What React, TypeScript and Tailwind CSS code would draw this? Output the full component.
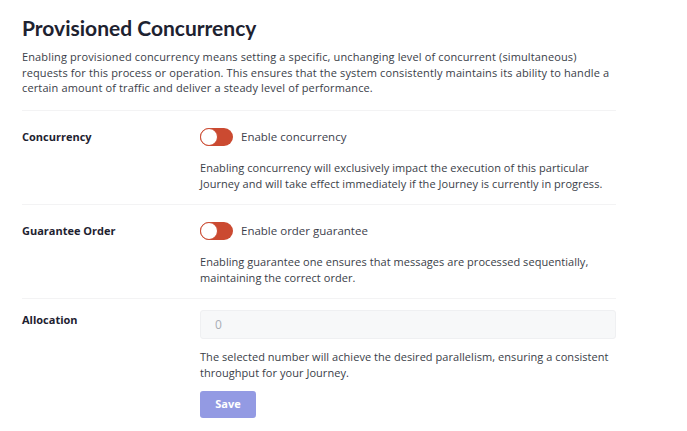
import { useState } from "react";

type Row = {
  id: string;
  label: string;
  toggle?: string;
  help: string;
};

const rows: Row[] = [
  {
    id: "concurrency",
    label: "Concurrency",
    toggle: "Enable concurrency",
    help: "Enabling concurrency will exclusively impact the execution of this particular Journey and will take effect immediately if the Journey is currently in progress.",
  },
  {
    id: "order",
    label: "Guarantee Order",
    toggle: "Enable order guarantee",
    help: "Enabling guarantee one ensures that messages are processed sequentially, maintaining the correct order.",
  },
];

function Toggle({ label }: { label: string }) {
  const [on, setOn] = useState(false);
  return (
    <label className="flex items-center gap-2 cursor-pointer">
      <button
        type="button"
        onClick={() => setOn(!on)}
        className="relative h-[18px] w-[33px] rounded-full bg-[#cb4a31]"
      >
        <span
          className={
            on
              ? "absolute top-0 right-0 h-[18px] w-[18px] rounded-full border border-[#cb4a31] bg-white"
              : "absolute top-0 left-0 h-[18px] w-[18px] rounded-full border border-[#cb4a31] bg-white"
          }
        />
      </button>
      <span className="text-[11.5px] text-[#3d414c]">{label}</span>
    </label>
  );
}

export default function App() {
  return (
    <div className="min-h-screen bg-white font-['Open_Sans',sans-serif] text-[#3a3e48]">
      <div className="w-[594px] ml-[22px] pt-[14px]">
        <h1 className="font-['Lato',sans-serif] text-[21px] font-bold leading-[28px] text-[#1e2230]">
          Provisioned Concurrency
        </h1>
        <p className="mt-[7px] whitespace-nowrap text-[11px] leading-[15.5px] tracking-[0.13px]">
          Enabling provisioned concurrency means setting a specific, unchanging level of concurrent (simultaneous)
          <br />
          requests for this process or operation. This ensures that the system consistently maintains its ability to handle a
          <br />
          certain amount of traffic and deliver a steady level of performance.
        </p>

        <div className="mt-[14px] border-t border-[#f3f3f4]">
          {rows.map((row) => (
            <div key={row.id} className="flex border-b border-[#f3f3f4] pt-[17px] pb-[12px]">
              <div className="w-[178px] text-[11px] font-bold text-[#1e2230] leading-[18px]">
                {row.label}
              </div>
              <div className="flex-1">
                {row.toggle ? <Toggle label={row.toggle} /> : null}
                <p className="mt-[14px] text-[11px] leading-[16px] tracking-[0.05px]">{row.help}</p>
              </div>
            </div>
          ))}

          <div className="flex pt-[11px]">
            <div className="w-[178px] text-[11px] font-bold text-[#1e2230] leading-[18px] pt-[1px]">
              Allocation
            </div>
            <div className="flex-1">
              <input
                disabled
                placeholder="0"
                className="h-[29px] w-full rounded-[3px] border border-[#eff0f2] bg-[#f7f8f9] px-[14px] text-[12px] placeholder:text-[#a9adb5]"
              />
              <p className="mt-[10px] text-[11px] leading-[16px] tracking-[0.05px]">
                The selected number will achieve the desired parallelism, ensuring a consistent throughput for your Journey.
              </p>
              <button
                type="button"
                className="mt-[10px] h-[27px] w-[56px] rounded-[3px] bg-[#939ae3] text-[11px] font-bold text-white"
              >
                Save
              </button>
            </div>
          </div>
        </div>
      </div>
    </div>
  );
}
